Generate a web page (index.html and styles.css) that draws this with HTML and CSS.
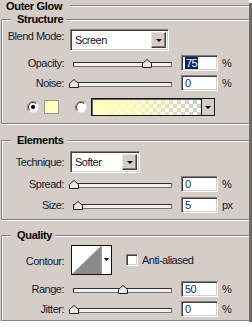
FILE: index.html
```html
<!DOCTYPE html>
<html lang="en">
<head>
    <meta charset="UTF-8">
    <meta name="viewport" content="width=device-width, initial-scale=1.0">
    <title>Outer Glow</title>
    <link rel="stylesheet" href="styles.css">
</head>
<body>
    <div class="panel">
        <div class="title-row">
            <span class="title">Outer Glow</span>
            <span class="rule"></span>
        </div>

        <!-- Structure -->
        <div class="group structure">
            <div class="legend">Structure</div>

            <div class="row row-blend">
                <span class="lbl lbl-top">Blend Mode:</span>
                <div class="select select-blend">
                    <span class="val">Screen</span>
                    <span class="drop"><span class="arrow"></span></span>
                </div>
            </div>

            <div class="row row-slider row-opacity">
                <span class="lbl">Opacity:</span>
                <div class="slider"><span class="thumb" style="left: 75%"></span></div>
                <div class="num"><span class="sel">75</span></div>
                <span class="unit">%</span>
            </div>

            <div class="row row-slider row-noise">
                <span class="lbl">Noise:</span>
                <div class="slider"><span class="thumb" style="left: 0%"></span></div>
                <div class="num">0</div>
                <span class="unit">%</span>
            </div>

            <div class="row row-color">
                <span class="radio checked"></span>
                <span class="swatch"></span>
                <span class="radio radio-2"></span>
                <div class="gradient">
                    <span class="grad-fill"></span>
                    <span class="grad-drop"><span class="arrow"></span></span>
                </div>
            </div>
        </div>

        <!-- Elements -->
        <div class="group elements">
            <div class="legend">Elements</div>

            <div class="row row-technique">
                <span class="lbl">Technique:</span>
                <div class="select select-technique">
                    <span class="val">Softer</span>
                    <span class="drop"><span class="arrow"></span></span>
                </div>
            </div>

            <div class="row row-slider row-spread">
                <span class="lbl">Spread:</span>
                <div class="slider"><span class="thumb" style="left: 0%"></span></div>
                <div class="num">0</div>
                <span class="unit">%</span>
            </div>

            <div class="row row-slider row-size">
                <span class="lbl">Size:</span>
                <div class="slider"><span class="thumb" style="left: 4.5%"></span></div>
                <div class="num">5</div>
                <span class="unit">px</span>
            </div>
        </div>

        <!-- Quality -->
        <div class="group quality">
            <div class="legend">Quality</div>

            <div class="row row-contour">
                <span class="lbl">Contour:</span>
                <svg class="contour" width="41" height="30" viewBox="0 0 41 30">
                    <rect x="0.5" y="0.5" width="40" height="29" fill="#fff" stroke="#101010"/>
                    <polygon points="1,29 30,1 30,29" fill="#8a8a8a"/>
                    <line x1="30.5" y1="1" x2="30.5" y2="29" stroke="#a0a0a0"/>
                    <polygon points="33,13 38,13 35.5,16" fill="#000"/>
                </svg>
                <span class="check"></span>
                <span class="check-label">Anti-aliased</span>
            </div>

            <div class="row row-slider row-range">
                <span class="lbl">Range:</span>
                <div class="slider"><span class="thumb" style="left: 50%"></span></div>
                <div class="num">50</div>
                <span class="unit">%</span>
            </div>

            <div class="row row-slider row-jitter">
                <span class="lbl">Jitter:</span>
                <div class="slider"><span class="thumb" style="left: 0%"></span></div>
                <div class="num">0</div>
                <span class="unit">%</span>
            </div>
        </div>
    </div>
</body>
</html>
```

FILE: styles.css
```css
body {
    margin: 0;
    background: #ffffff;
    font-family: "Liberation Sans", Arial, sans-serif;
    font-size: 11px;
    letter-spacing: -0.5px;
    color: #121a30;
}

.panel {
    width: 249px;
    height: 322px;
    background: #d5cdc8;
    box-shadow: 3px 3px 0 #6e6a68;
    overflow: hidden;
}

/* title + rule */
.title-row {
    display: flex;
    align-items: center;
    height: 12px;
    padding: 0 0 7px 6px;
}

.title {
    font-weight: bold;
    letter-spacing: -0.3px;
    color: #000;
    line-height: 12px;
}

.rule {
    flex: 1;
    height: 0;
    margin-left: 8px;
    border-top: 1px solid #8a8480;
    border-bottom: 1px solid #fff;
}

/* group boxes */
.group {
    margin-left: 1px;
    border-top: 1px solid #8a8480;
    border-left: 1px solid #8a8480;
    border-bottom: 1px solid #8a8480;
    box-shadow: inset 1px 1px 0 #fff, 0 1px 0 #fff;
}

.legend {
    display: table;
    height: 12px;
    line-height: 12px;
    margin: -7px 0 4px 9px;
    padding: 0 3px 0 6px;
    background: #d5cdc8;
    font-weight: bold;
    letter-spacing: -0.3px;
    color: #000;
}

.structure {
    padding-bottom: 7px;
}

.elements {
    margin-top: 16px;
    padding-bottom: 6px;
}

.elements .legend {
    margin-bottom: 5px;
}

.quality {
    margin-top: 15px;
    padding-bottom: 3px;
}

/* rows */
.row {
    display: flex;
    align-items: center;
}

.lbl {
    width: 62px;
    text-align: right;
    line-height: 13px;
    flex-shrink: 0;
}

.lbl-top {
    align-self: flex-start;
    padding-top: 1px;
}

.row-blend {
    height: 22px;
    margin-bottom: 4px;
}

.row-slider {
    height: 16px;
}

.row-opacity {
    margin-bottom: 4px;
}

.row-noise {
    margin-bottom: 7px;
}

.row-color {
    height: 18px;
}

.row-technique {
    height: 22px;
    margin-bottom: 3px;
}

.row-spread {
    margin-bottom: 5px;
}

.row-contour {
    height: 30px;
    margin-bottom: 6px;
}

.row-contour .lbl {
    padding-top: 2px;
}

.row-range {
    margin-bottom: 4px;
}

/* dropdown */
.select {
    display: flex;
    height: 22px;
    box-sizing: border-box;
    margin-left: 6px;
    background: #fff;
    border: 1px solid;
    border-color: #808080 #fff #fff #808080;
    box-shadow: inset 1px 1px 0 #404040, inset -1px -1px 0 #d4d0c8;
    padding: 2px 2px 2px 2px;
}

.select-blend {
    width: 99px;
}

.select-technique {
    width: 70px;
}

.select .val {
    flex: 1;
    padding-left: 2px;
    line-height: 17px;
    color: #101830;
}

.drop {
    width: 15px;
    display: flex;
    align-items: center;
    justify-content: center;
    background: #d5cdc8;
    box-sizing: border-box;
    border: 1px solid;
    border-color: #e8e4e0 #404040 #404040 #e8e4e0;
    box-shadow: inset -1px -1px 0 #808080;
}

.arrow {
    width: 0;
    height: 0;
    border-left: 3px solid transparent;
    border-right: 3px solid transparent;
    border-top: 3px solid #000;
}

/* slider */
.slider {
    position: relative;
    width: 99px;
    height: 5px;
    box-sizing: border-box;
    margin: 2px 0 0 9px;
    background: #f4f2f0;
    border: 1px solid;
    border-color: #303030 #707070 #707070 #303030;
}

.thumb {
    position: absolute;
    bottom: -2px;
    width: 10px;
    height: 9px;
    margin-left: -5px;
    background:
        url("data:image/svg+xml;utf8,<svg xmlns='http://www.w3.org/2000/svg' width='10' height='9'><path d='M0.5 8.5V4.5L5 0.5L9.5 4.5V8.5Z' fill='%23ece8e4' stroke='%23202020'/></svg>") no-repeat;
}

/* number field */
.num {
    width: 37px;
    height: 16px;
    box-sizing: border-box;
    margin-left: 9px;
    padding-left: 3px;
    background: #fff;
    border: 1px solid;
    border-color: #808080 #fff #fff #808080;
    box-shadow: inset 1px 1px 0 #404040, inset -1px -1px 0 #d4d0c8;
    line-height: 14px;
    color: #1a2a70;
}

.num .sel {
    display: inline-block;
    background: #0a246a;
    color: #fff;
    padding: 0 1px;
    line-height: 12px;
    margin-top: 1px;
}

.unit {
    margin-left: 4px;
    color: #101830;
}

/* color row */
.radio {
    width: 12px;
    height: 12px;
    margin-left: 25px;
    flex-shrink: 0;
    background:
        url("data:image/svg+xml;utf8,<svg xmlns='http://www.w3.org/2000/svg' width='12' height='12'><circle cx='6' cy='6' r='5.5' fill='%23fff'/><path d='M2.1 9.9A5.5 5.5 0 0 1 9.9 2.1' fill='none' stroke='%23808080'/><path d='M2.8 9.2A4.5 4.5 0 0 1 9.2 2.8' fill='none' stroke='%23404040'/></svg>") no-repeat;
}

.radio.checked {
    background:
        url("data:image/svg+xml;utf8,<svg xmlns='http://www.w3.org/2000/svg' width='12' height='12'><circle cx='6' cy='6' r='5.5' fill='%23fff'/><path d='M2.1 9.9A5.5 5.5 0 0 1 9.9 2.1' fill='none' stroke='%23808080'/><path d='M2.8 9.2A4.5 4.5 0 0 1 9.2 2.8' fill='none' stroke='%23404040'/><circle cx='6' cy='6' r='2' fill='%23000'/></svg>") no-repeat;
}

.radio-2 {
    margin-left: 16px;
}

.swatch {
    width: 15px;
    height: 14px;
    box-sizing: border-box;
    margin-left: 5px;
    background: #ffffc0;
    border: 1px solid #9a9690;
}

.gradient {
    display: flex;
    width: 124px;
    height: 18px;
    box-sizing: border-box;
    margin-left: 4px;
    border: 1px solid #181818;
    box-shadow: inset 1px 1px 0 #606060;
}

.grad-fill {
    flex: 1;
    margin: 1px 0 0 1px;
    background-color: #fff;
    background-image:
        linear-gradient(to right, #ffffc0 0%, rgba(255, 255, 192, 0.85) 35%, rgba(255, 255, 192, 0) 100%),
        linear-gradient(45deg, #cccccc 25%, transparent 25%, transparent 75%, #cccccc 75%),
        linear-gradient(45deg, #cccccc 25%, transparent 25%, transparent 75%, #cccccc 75%);
    background-size: 100% 100%, 8px 8px, 8px 8px;
    background-position: 0 0, 0 0, 4px 4px;
}

.grad-drop {
    width: 12px;
    display: flex;
    align-items: center;
    justify-content: center;
    background: #d5cdc8;
    border-left: 1px solid #181818;
}

/* contour + checkbox */
.contour {
    display: block;
    margin-left: 7px;
    flex-shrink: 0;
}

.check {
    width: 12px;
    height: 12px;
    box-sizing: border-box;
    margin-left: 14px;
    background: #fff;
    border: 1px solid;
    border-color: #808080 #fff #fff #808080;
    box-shadow: inset 1px 1px 0 #404040, inset -1px -1px 0 #d4d0c8;
}

.check-label {
    margin-left: 4px;
    color: #101830;
}
```
